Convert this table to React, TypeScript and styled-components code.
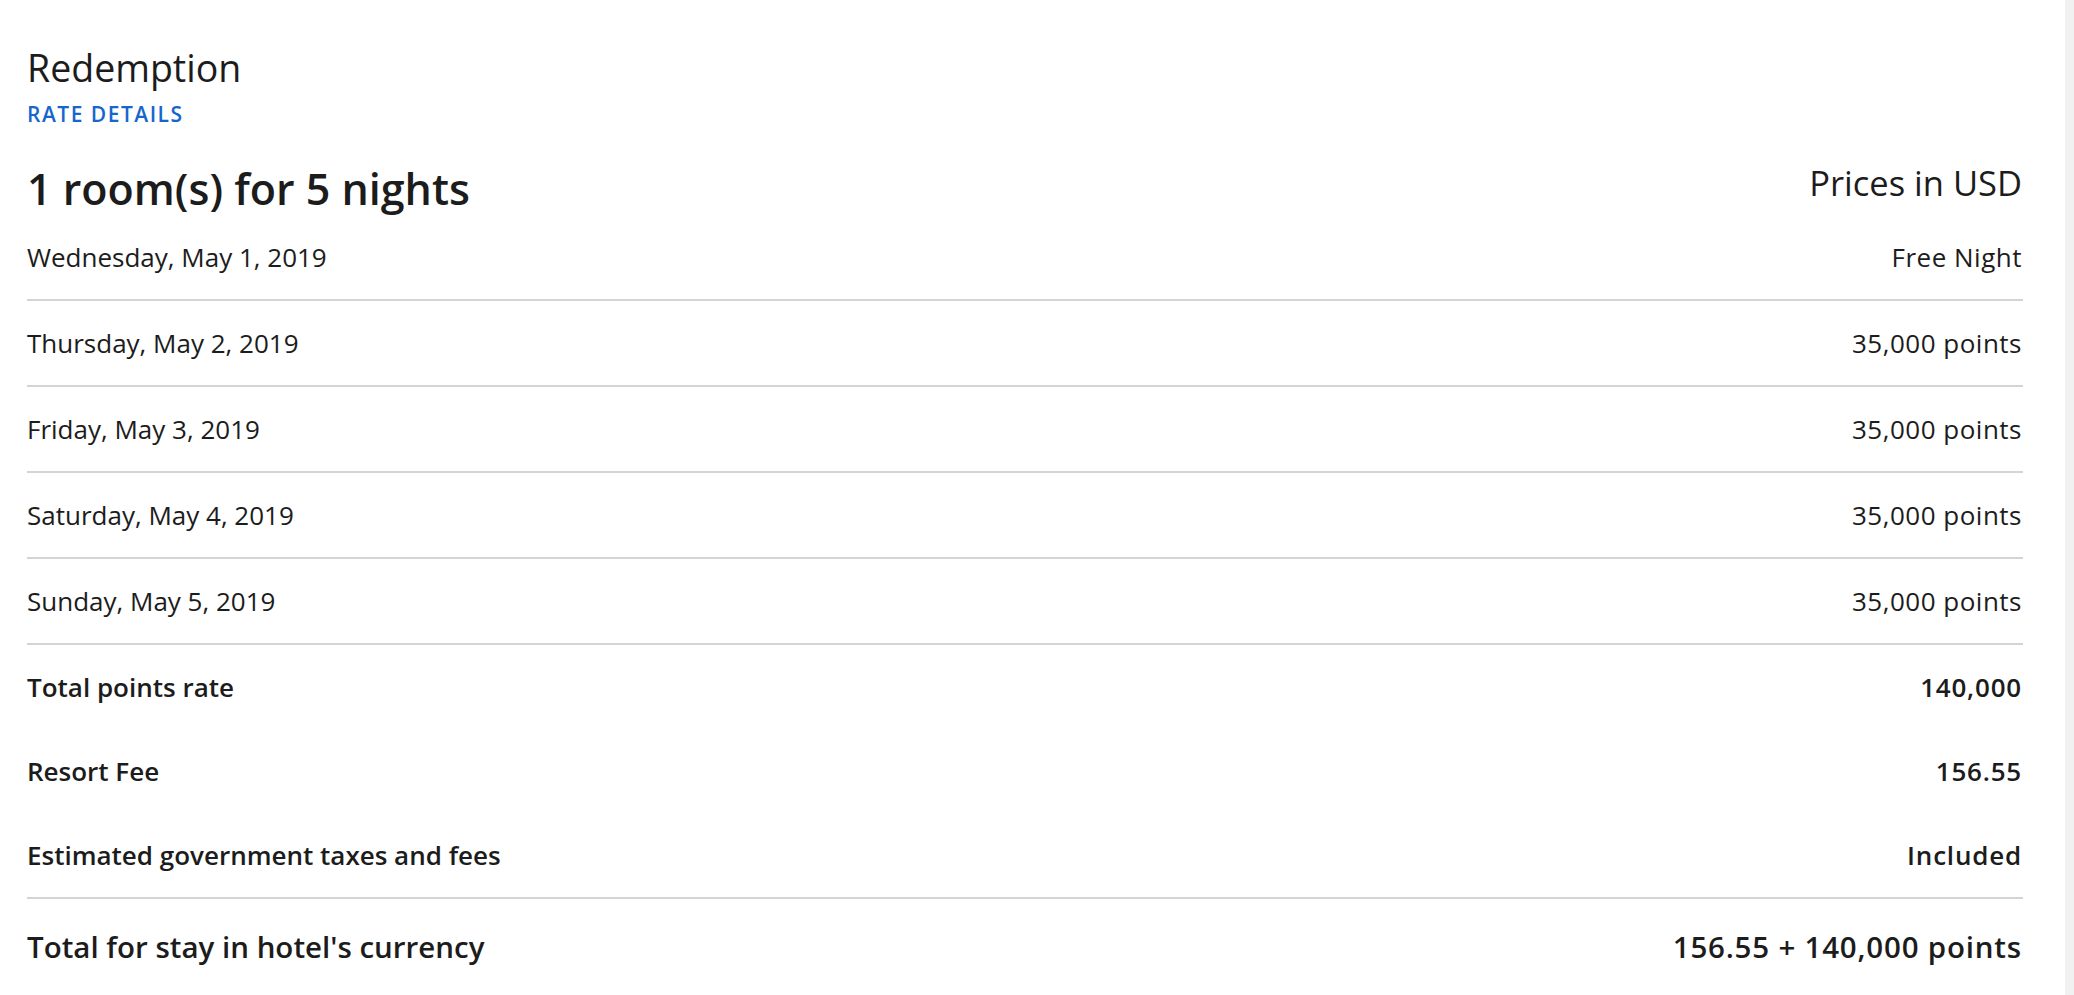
import React from "react";
import styled, { createGlobalStyle } from "styled-components";

const GlobalStyle = createGlobalStyle`
  html, body {
    margin: 0;
    padding: 0;
    background: #ffffff;
  }
  body {
    font-family: "Open Sans", "Liberation Sans", sans-serif;
    color: #1c1c1c;
  }
`;

const Page = styled.div`
  display: flex;
  height: 995px;
  overflow: hidden;
`;

const Panel = styled.main`
  flex: 1;
  background: #ffffff;
  padding: 46px 42px 0 27px;
`;

const Gutter = styled.div`
  width: 9px;
  background: #f1f1f1;
`;

const Title = styled.h2`
  margin: 0;
  font-size: 37.5px;
  line-height: 44px;
  font-weight: 400;
`;

const RateLink = styled.a`
  display: block;
  margin-top: 10px;
  font-size: 21px;
  line-height: 28px;
  font-weight: 600;
  letter-spacing: 1.5px;
  color: #1766cc;
  text-decoration: none;
`;

const Header = styled.div`
  display: flex;
  justify-content: space-between;
  align-items: flex-start;
  margin-top: 35px;
  height: 52px;
`;

const Rooms = styled.h3`
  margin: 0;
  font-size: 43px;
  line-height: 52px;
  font-weight: 600;
`;

const Currency = styled.span`
  font-size: 34.5px;
  line-height: 40px;
  font-weight: 400;
  padding-right: 1px;
`;

const Row = styled.div<{ $divider?: boolean; $height?: number }>`
  display: flex;
  justify-content: space-between;
  align-items: center;
  height: ${(p) => p.$height ?? 84}px;
  padding-right: 1px;
  border-bottom: ${(p) => (p.$divider ? "2px solid #d4d4d4" : "none")};
`;

const Cell = styled.span<{ $bold?: boolean; $big?: boolean; $value?: boolean }>`
  font-size: ${(p) => (p.$big ? 29.5 : 26)}px;
  line-height: 36px;
  font-weight: ${(p) => (p.$bold ? 600 : 400)};
  letter-spacing: ${(p) => (p.$value ? (p.$bold ? 0.8 : 0.5) : 0)}px;
`;

const nights = [
  { date: "Wednesday, May 1, 2019", rate: "Free Night" },
  { date: "Thursday, May 2, 2019", rate: "35,000 points" },
  { date: "Friday, May 3, 2019", rate: "35,000 points" },
  { date: "Saturday, May 4, 2019", rate: "35,000 points" },
  { date: "Sunday, May 5, 2019", rate: "35,000 points" },
];

const totals = [
  { label: "Total points rate", value: "140,000" },
  { label: "Resort Fee", value: "156.55" },
  { label: "Estimated government taxes and fees", value: "Included" },
];

const App: React.FC = () => {
  return (
    <>
      <GlobalStyle />
      <Page>
        <Panel>
          <Title>Redemption</Title>
          <RateLink href="#">RATE DETAILS</RateLink>
          <Header>
            <Rooms>1 room(s) for 5 nights</Rooms>
            <Currency>Prices in USD</Currency>
          </Header>
          {nights.map((n) => (
            <Row key={n.date} $divider>
              <Cell>{n.date}</Cell>
              <Cell $value>{n.rate}</Cell>
            </Row>
          ))}
          {totals.map((t, i) => (
            <Row key={t.label} $divider={i === totals.length - 1}>
              <Cell $bold>{t.label}</Cell>
              <Cell $bold $value>
                {t.value}
              </Cell>
            </Row>
          ))}
          <Row $height={96}>
            <Cell $bold $big>
              Total for stay in hotel's currency
            </Cell>
            <Cell $bold $big $value>
              156.55 + 140,000 points
            </Cell>
          </Row>
        </Panel>
        <Gutter />
      </Page>
    </>
  );
};

export default App;
